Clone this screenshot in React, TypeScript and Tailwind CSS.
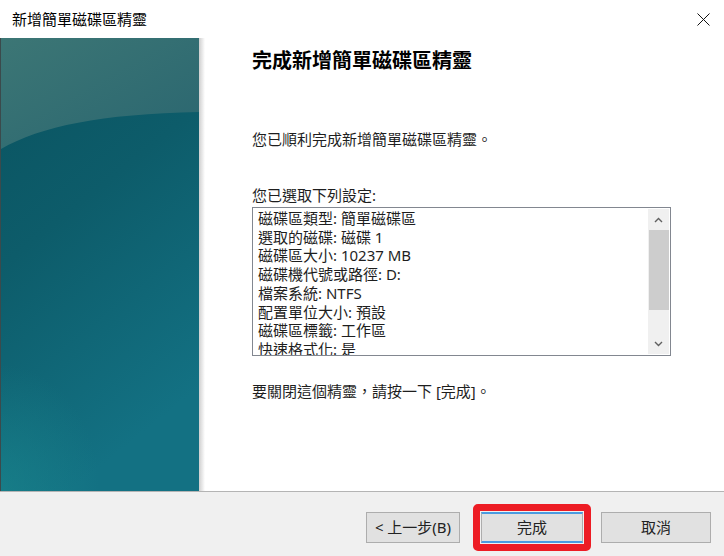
import React from "react";

const FONT = '"Noto Sans", "Noto Sans CJK TC", sans-serif';

function LeftArt() {
  return (
    <svg width="198" height="453" viewBox="0 0 198 453" className="block">
      <defs>
        <linearGradient id="base" x1="0" y1="0" x2="0.35" y2="1">
          <stop offset="0" stopColor="#0a5360" />
          <stop offset="0.45" stopColor="#0d5c6a" />
          <stop offset="1" stopColor="#137183" />
        </linearGradient>
        <radialGradient id="glow" cx="0" cy="1" r="0.5">
          <stop offset="0" stopColor="#1a878e" stopOpacity="0.6" />
          <stop offset="1" stopColor="#1a878e" stopOpacity="0" />
        </radialGradient>
        <linearGradient id="cap" x1="0" y1="0" x2="1" y2="1">
          <stop offset="0" stopColor="#3c7675" />
          <stop offset="1" stopColor="#2a6670" />
        </linearGradient>
      </defs>
      <rect x="0" y="0" width="198" height="453" fill="url(#base)" />
      <rect x="0" y="200" width="198" height="253" fill="url(#glow)" />
      <path d="M0,111 C40,88 100,76 198,74 L198,0 L0,0 Z" fill="url(#cap)" />
    </svg>
  );
}

function Chevron({ up }: { up?: boolean }) {
  return (
    <svg width="9" height="6" viewBox="0 0 9 6">
      <path
        d={up ? "M1,5 L4.5,1.5 L8,5" : "M1,1 L4.5,4.5 L8,1"}
        fill="none"
        stroke="#606060"
        strokeWidth="1.4"
      />
    </svg>
  );
}

export default function App() {
  const items = [
    "磁碟區類型: 簡單磁碟區",
    "選取的磁碟: 磁碟 1",
    "磁碟區大小: 10237 MB",
    "磁碟機代號或路徑: D:",
    "檔案系統: NTFS",
    "配置單位大小: 預設",
    "磁碟區標籤: 工作區",
    "快速格式化: 是",
  ];
  return (
    <div
      className="w-[724px] h-[556px] bg-white flex flex-col overflow-hidden text-[#1e1e1e]"
      style={{ fontFamily: FONT }}
    >
      {/* title bar */}
      <div className="h-[38px] flex items-center justify-between pl-[12px] pr-[14px] shrink-0">
        <span className="text-[15px] leading-[20px] text-black">新增簡單磁碟區精靈</span>
        <svg width="13" height="13" viewBox="0 0 13 13">
          <path d="M0.5,0.5 L12.5,12.5 M12.5,0.5 L0.5,12.5" stroke="#111" strokeWidth="1" />
        </svg>
      </div>

      {/* body */}
      <div className="h-[453px] flex shrink-0">
        <div className="w-[1px] bg-[#3b4a4c]" />
        <LeftArt />
        <div className="w-[6px] bg-gradient-to-r from-[#cfcfcf] to-white" />
        <div className="flex-1 flex flex-col pl-[47px] pt-[11px]">
          <div className="text-[20px] leading-[24px] font-bold text-black">
            完成新增簡單磁碟區精靈
          </div>
          <div className="mt-[56px] text-[15px] leading-[20px]">
            您已順利完成新增簡單磁碟區精靈。
          </div>
          <div className="mt-[36px] text-[15px] leading-[20px]">您已選取下列設定:</div>
          <div className="mt-[2px] w-[419px] h-[149px] border border-[#828790] flex overflow-hidden">
            <div className="flex-1 pl-[5px] pt-[1px] text-[15px] leading-[18.7px] overflow-hidden whitespace-nowrap">
              {items.map((t) => (
                <div key={t}>{t}</div>
              ))}
            </div>
            <div className="w-[21px] bg-[#f0f0f0] flex flex-col items-center mr-[1px] my-[1px]">
              <div className="h-[21px] flex items-center justify-center">
                <Chevron up />
              </div>
              <div className="w-[20px] h-[80px] bg-[#cdcdcd]" />
              <div className="flex-1" />
              <div className="h-[21px] flex items-center justify-center">
                <Chevron />
              </div>
            </div>
          </div>
          <div className="mt-[25px] text-[15px] leading-[20px]">
            要關閉這個精靈，請按一下 [完成]。
          </div>
        </div>
      </div>

      {/* button bar */}
      <div className="flex-1 bg-[#f0f0f0] border-t border-[#b4b4b4] flex items-start pt-[20px] pl-[366px]">
        <div className="w-[94px] h-[31px] bg-[#e1e1e1] border border-[#adadad] flex items-center justify-center text-[15px] text-[#222]">
          &lt; 上一步(B)
        </div>
        <div className="relative ml-[21px] w-[102px] h-[31px]">
          <div className="absolute -left-[8px] -right-[8px] -top-[8px] -bottom-[8px] border-[7px] border-[#ed1c24] rounded-[5px]" />
          <div className="w-full h-full bg-[#e1e1e1] border-y-2 border-x border-y-[#4a9be0] border-x-[#adadad] flex items-center justify-center text-[15px] text-[#222]">
            完成
          </div>
        </div>
        <div className="ml-[18px] w-[110px] h-[31px] bg-[#e1e1e1] border border-[#adadad] flex items-center justify-center text-[15px] text-[#222]">
          取消
        </div>
      </div>
    </div>
  );
}
